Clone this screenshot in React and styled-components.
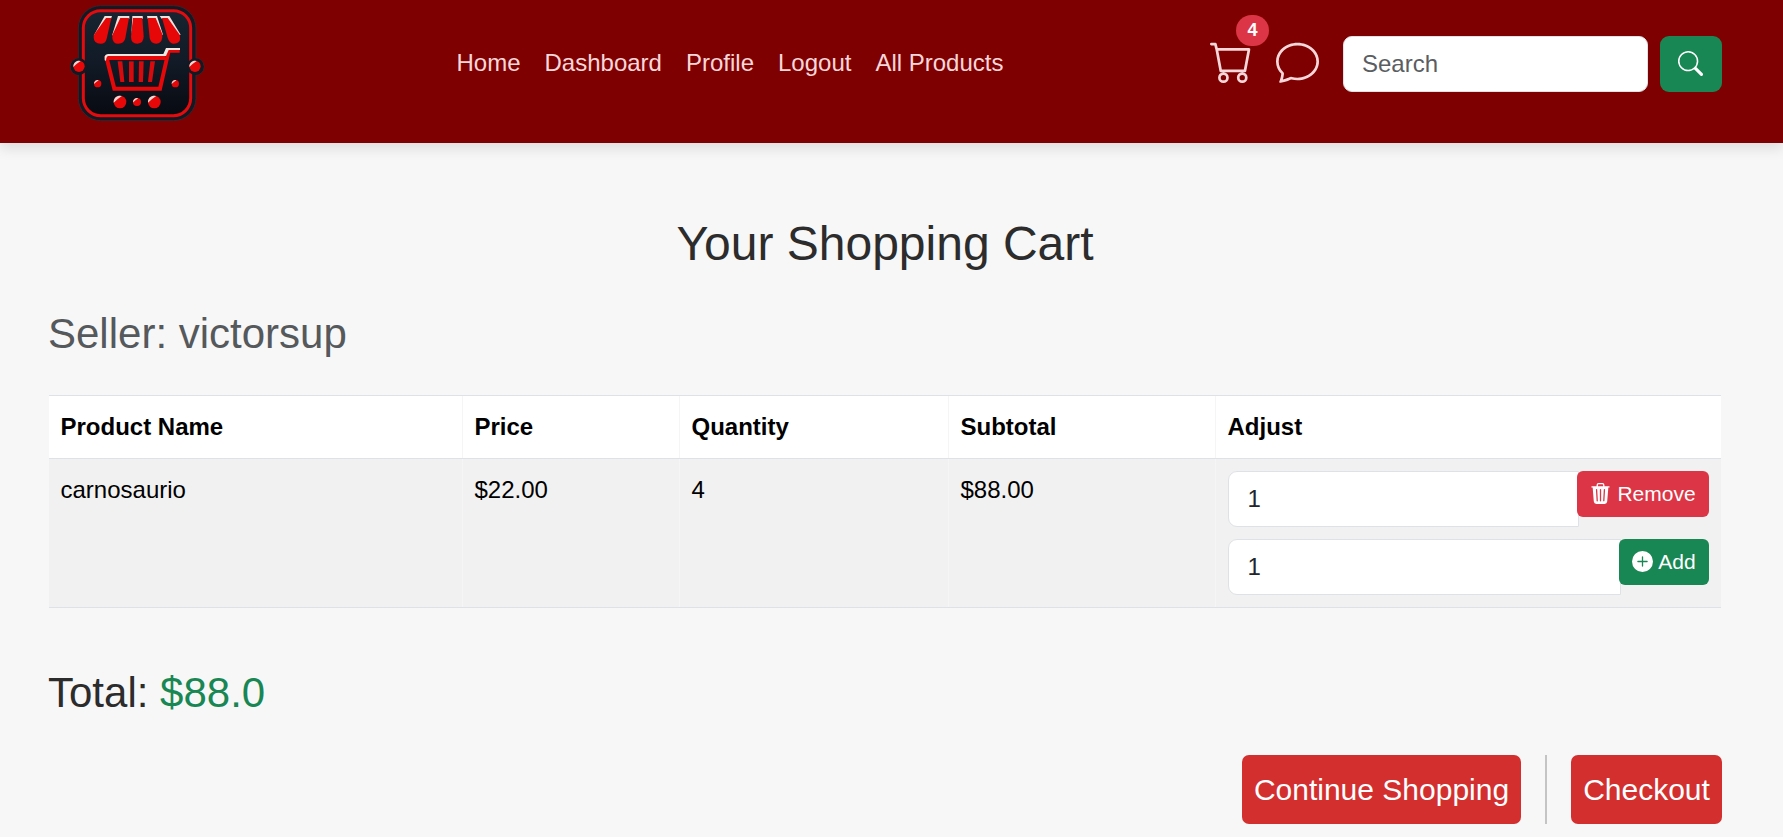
import React from "react";
import styled, { createGlobalStyle } from "styled-components";
import { BsCart, BsChat, BsSearch, BsTrash3Fill, BsPlusCircleFill } from "react-icons/bs";

const GlobalStyle = createGlobalStyle`
  *, *::before, *::after { box-sizing: border-box; }
  body {
    margin: 0;
    background: #f7f7f7;
    color: #2c2c2c;
    font-family: "Liberation Sans", Arial, sans-serif;
    font-size: 24px;
    line-height: 1.6;
  }
`;

const Page = styled.div`
  height: 837px;
  overflow: hidden;
`;

const Header = styled.header`
  display: flex;
  align-items: flex-start;
  height: 143px;
  padding: 0 61px 0 60px;
  background: #7f0000;
  box-shadow: 0 6px 12px rgba(0, 0, 0, 0.1);
`;

const LogoLink = styled.a`
  display: block;
  width: 160px;
  height: 124px;
  svg { display: block; }
`;

const Nav = styled.nav`
  display: flex;
  gap: 24px;
  margin: 44px 0 0 236.5px;
`;

const NavLink = styled.a`
  color: #f8d7da;
  line-height: 38px;
  white-space: nowrap;
`;

const Tools = styled.div`
  display: flex;
  align-items: flex-start;
  margin-left: auto;
  padding-top: 36px;
`;

const IconLink = styled.a`
  position: relative;
  display: block;
  margin: 4px ${(p) => p.$gap}px 0 0;
  color: #f8d7da;
  svg { display: block; width: 43px; height: 43px; }
`;

const Badge = styled.span`
  position: absolute;
  left: 26px;
  top: -25.5px;
  width: 33px;
  height: 31.5px;
  border-radius: 16px;
  background: #dc3545;
  color: #fff;
  font-size: 18px;
  font-weight: 700;
  line-height: 31px;
  text-align: center;
`;

const Input = styled.input`
  height: 56px;
  padding: 0 18px;
  border: 1px solid #dee2e6;
  border-radius: 9px;
  background: #fff;
  color: #212529;
  font: inherit;
  outline: none;
  &::placeholder { color: #5a5e62; opacity: 1; }
`;

const SearchInput = styled(Input)`
  width: 305px;
  margin-right: 12px;
`;

const SearchButton = styled.button`
  display: flex;
  align-items: center;
  justify-content: center;
  width: 62px;
  height: 56px;
  padding: 0 1px 2px 0;
  border: 0;
  border-radius: 9px;
  background: #198754;
  color: #fff;
  svg { width: 25px; height: 25px; }
`;

const Main = styled.main`
  width: 1770px;
  padding: 72px 48px 0;
`;

const Title = styled.h2`
  margin: 0;
  font-size: 48px;
  font-weight: 400;
  line-height: 58px;
  text-align: center;
`;

const Seller = styled.h3`
  margin: 36px 0 36px;
  font-size: 42px;
  font-weight: 400;
  line-height: 50px;
  color: #55595c;
`;

const Table = styled.table`
  width: 1672px;
  margin-left: 1px;
  table-layout: fixed;
  border-collapse: collapse;
  color: #000;
`;

const Cell = styled.td`
  padding: 12px;
  border: solid #dee2e6;
  border-width: 1px 0;
  background: ${(p) => (p.$head ? "#fff" : "#f1f1f1")};
  font-weight: ${(p) => (p.$head ? 700 : 400)};
  line-height: 38px;
  height: ${(p) => (p.$head ? 63 : 149)}px;
  text-align: left;
  vertical-align: top;
  &:first-child { padding-left: 11.5px; }
  & + & { border-left: 1px solid #f5f5f5; }
`;

const AdjustForm = styled.form`
  display: flex;
  align-items: flex-start;
  & + & { margin-top: 12px; }
`;

const QuantityInput = styled(Input)`
  flex: 1;
  min-width: 0;
  padding-left: 19px;
  border-radius: 9px 0 0 9px;
`;

const AdjustButton = styled.button`
  display: flex;
  align-items: center;
  justify-content: center;
  gap: ${(p) => p.$gap}px;
  width: ${(p) => p.$width}px;
  height: 46px;
  margin-left: -1.5px;
  padding: 0;
  z-index: 1;
  border: 0;
  border-radius: 6px;
  background: ${(p) => p.$color};
  color: #fff;
  font: 21px "Liberation Sans", Arial, sans-serif;
  svg { width: 21px; height: 21px; margin-top: -1px; }
`;

const Total = styled.h3`
  margin: 60px 0 0;
  font-size: 42px;
  font-weight: 400;
  line-height: 50px;
`;

const Amount = styled.span`
  color: #198754;
`;

const Actions = styled.div`
  display: flex;
  justify-content: flex-end;
  height: 69px;
  margin-top: 37px;
`;

const ActionButton = styled.a`
  width: ${(p) => p.$width}px;
  border-radius: 7px;
  background: #d32f2f;
  color: #fff;
  font-size: 30px;
  line-height: 69px;
  text-align: center;
  white-space: nowrap;
`;

const Divider = styled.span`
  width: 2px;
  margin: 0 24px;
  background: #c4c4c4;
`;

const RedDot = ({ cx, cy, r }) => (
  <g>
    <circle cx={cx} cy={cy} r={r} fill="#e60808" />
    <path
      d={`M${cx - r} ${cy + r * 0.1}A${r} ${r} 0 0 1 ${cx + r * 0.3} ${cy - r * 0.95}Q${cx - r * 0.4} ${cy - r * 0.5} ${cx - r} ${cy + r * 0.1}Z`}
      fill="#ecd9d6"
    />
  </g>
);

const Logo = () => (
  <svg width="160" height="124" viewBox="0 0 480 372">
    <defs>
      <linearGradient id="panel" x1="0" y1="0" x2="0" y2="1">
        <stop offset="0" stopColor="#182431" />
        <stop offset="0.5" stopColor="#111a26" />
        <stop offset="1" stopColor="#080a11" />
      </linearGradient>
    </defs>
    <g fill="#111923" stroke="#43202a" strokeWidth="3">
      <circle cx="57" cy="200" r="26" />
      <circle cx="406" cy="200" r="26" />
      <rect x="55" y="17" width="353" height="345" rx="67" />
    </g>
    <rect x="70" y="32" width="322" height="315" rx="52" fill="url(#panel)" stroke="#e30b0d" strokeWidth="9" />
    <circle cx="57" cy="200" r="25" fill="#111923" />
    <circle cx="406" cy="200" r="25" fill="#111923" />
    <g fill="#eee3df">
      <path d="M134 48H156L153 56H139L106 103L101 107Z" />
      <path d="M174 48H208V56H182L161 103L156 107Z" />
      <path d="M217 48H248L249 56H221L214 104Z" />
      <path d="M261 48H291L309 104H304L286 56H263Z" />
      <path d="M299 48H328L362 104L356 106L323 56H305Z" />
    </g>
    <g fill="#e60808">
      <path d="M138 54H154L140 116Q137 131 122 131Q101 131 101 112Q101 106 104 101Z" />
      <path d="M181 54H207L196 114Q193 131 175 131Q158 131 157 113L158 103Z" />
      <path d="M219 54H247L251 109Q251 131 232 131Q213 131 213 110Z" />
      <path d="M263 54H287L307 102Q309 131 289 131Q272 131 269 114Z" />
      <path d="M306 54H323L358 103Q367 131 340 131Q328 129 323 113Z" />
    </g>
    <path d="M359 152H326L300 266H163L140 174H315" fill="none" stroke="#e60808" strokeWidth="12" />
    <path d="M134 181L134 170Q136 162 145 162H310L318 144H360V150H326L318 168H145Q139 168 138 182Z" fill="#f1e8e4" />
    <g fill="#d70a0d">
      <path d="M173 184H187L193 246H181Z" />
      <path d="M207 184H221V246H207Z" />
      <path d="M237 184H251L249 246H236Z" />
      <path d="M271 184H285L276 246H264Z" />
    </g>
    <RedDot cx={57} cy={199} r={17} />
    <RedDot cx={405} cy={199} r={17} />
    <RedDot cx={113} cy={251} r={11} />
    <RedDot cx={346} cy={251} r={11} />
    <RedDot cx={180} cy={306} r={19} />
    <RedDot cx={231} cy={306} r={12} />
    <RedDot cx={283} cy={306} r={19} />
  </svg>
);

const links = ["Home", "Dashboard", "Profile", "Logout", "All Products"];
const columns = [
  ["Product Name", 413],
  ["Price", 217],
  ["Quantity", 269],
  ["Subtotal", 267],
  ["Adjust", 506],
];

export default function App() {
  return (
    <Page>
      <GlobalStyle />
      <Header>
        <LogoLink><Logo /></LogoLink>
        <Nav>
          {links.map((label) => <NavLink key={label}>{label}</NavLink>)}
        </Nav>
        <Tools>
          <IconLink $gap={23}><BsCart /><Badge>4</Badge></IconLink>
          <IconLink $gap={24}><BsChat /></IconLink>
          <SearchInput placeholder="Search" />
          <SearchButton aria-label="Search"><BsSearch /></SearchButton>
        </Tools>
      </Header>
      <Main>
        <Title>Your Shopping Cart</Title>
        <Seller>Seller: victorsup</Seller>
        <Table>
          <colgroup>
            {columns.map(([name, width]) => <col key={name} width={width} />)}
          </colgroup>
          <thead>
            <tr>{columns.map(([name]) => <Cell as="th" $head key={name}>{name}</Cell>)}</tr>
          </thead>
          <tbody>
            <tr>
              <Cell>carnosaurio</Cell>
              <Cell>$22.00</Cell>
              <Cell>4</Cell>
              <Cell>$88.00</Cell>
              <Cell>
                <AdjustForm>
                  <QuantityInput defaultValue="1" />
                  <AdjustButton type="button" $width={132} $gap={6} $color="#dc3545"><BsTrash3Fill />Remove</AdjustButton>
                </AdjustForm>
                <AdjustForm>
                  <QuantityInput defaultValue="1" />
                  <AdjustButton type="button" $width={90} $gap={5} $color="#198754"><BsPlusCircleFill />Add</AdjustButton>
                </AdjustForm>
              </Cell>
            </tr>
          </tbody>
        </Table>
        <Total>Total: <Amount>$88.0</Amount></Total>
        <Actions>
          <ActionButton $width={279}>Continue Shopping</ActionButton>
          <Divider />
          <ActionButton $width={151}>Checkout</ActionButton>
        </Actions>
      </Main>
    </Page>
  );
}
